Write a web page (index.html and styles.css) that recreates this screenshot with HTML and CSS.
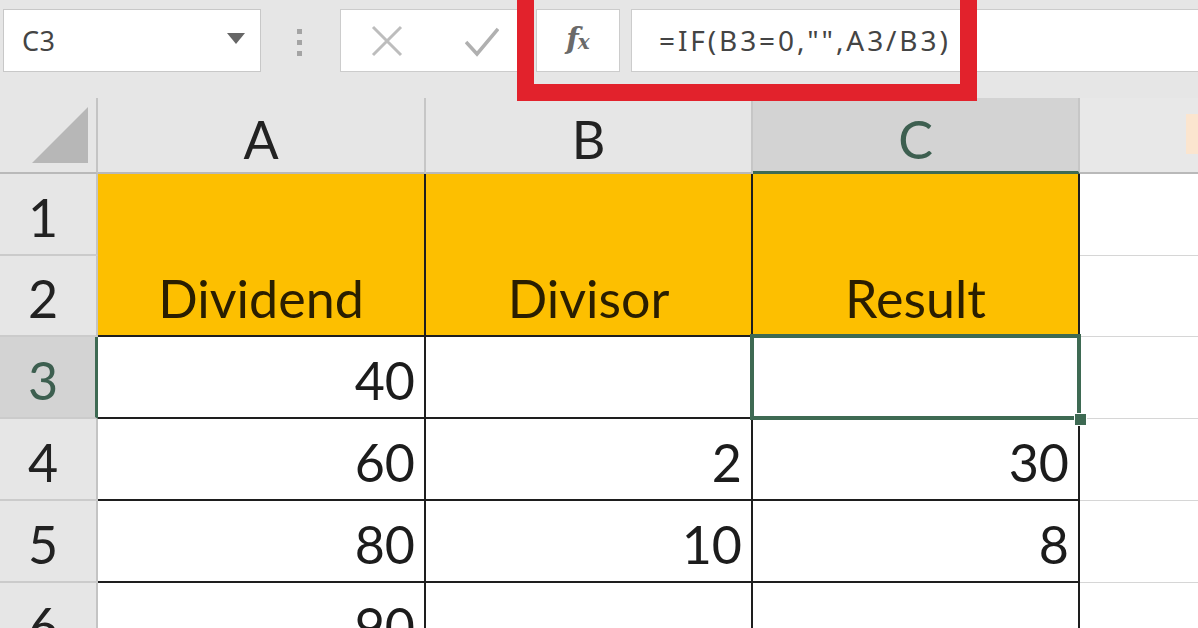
FILE: index.html
```html
<!DOCTYPE html>
<html>
<head>
<meta charset="utf-8">
<link rel="stylesheet" href="styles.css">
</head>
<body>
<div class="page">
  <div class="toolbar">
    <div class="namebox">
      <span class="name">C3</span>
      <svg class="drop" width="18" height="11" viewBox="0 0 18 11"><polygon points="0,0 18,0 9,11" fill="#666"/></svg>
    </div>
    <div class="dots"><i></i><i></i><i></i></div>
    <div class="editbox">
      <svg class="cancel" width="32" height="32" viewBox="0 0 32 32"><path d="M2 2 L30 30 M30 2 L2 30" stroke="#bdbdbd" stroke-width="3" fill="none"/></svg>
      <svg class="enter" width="34" height="30" viewBox="0 0 34 30"><path d="M1 15 L12 27 L33 2" stroke="#b0b0b0" stroke-width="3.5" fill="none"/></svg>
    </div>
    <div class="fxbox"><span class="fx">f<span class="fxx">x</span></span></div>
    <div class="formula">=IF(B3=0,"",A3/B3)</div>
    <div class="redmark"></div>
  </div>

  <div class="grid">
    <div class="corner"><svg width="56" height="56" viewBox="0 0 56 56"><polygon points="56,0 56,56 0,56" fill="#b7b7b7"/></svg></div>
    <div class="colhead">A</div>
    <div class="colhead">B</div>
    <div class="colhead active">C</div>
    <div class="colhead last"><span class="peek"></span></div>

    <div class="rowhead">1</div>
    <div class="cell gold merged">Dividend</div>
    <div class="cell gold merged">Divisor</div>
    <div class="cell gold merged">Result</div>
    <div class="cell free"></div>

    <div class="rowhead">2</div>
    <div class="cell free"></div>

    <div class="rowhead active">3</div>
    <div class="cell num">40</div>
    <div class="cell num"></div>
    <div class="cell num selected"><span class="handle"></span></div>
    <div class="cell free"></div>

    <div class="rowhead">4</div>
    <div class="cell num">60</div>
    <div class="cell num">2</div>
    <div class="cell num">30</div>
    <div class="cell free"></div>

    <div class="rowhead">5</div>
    <div class="cell num">80</div>
    <div class="cell num">10</div>
    <div class="cell num">8</div>
    <div class="cell free"></div>

    <div class="rowhead">6</div>
    <div class="cell num">90</div>
    <div class="cell num"></div>
    <div class="cell num"></div>
    <div class="cell free"></div>
  </div>
</div>
</body>
</html>
```

FILE: styles.css
```css
html, body {
  margin: 0;
  padding: 0;
}
body {
  background: #e6e6e6;
  width: 1198px;
  height: 628px;
  overflow: hidden;
}
.page {
  width: 1198px;
  height: 628px;
  overflow: hidden;
  position: relative;
}

/* ---------- formula bar ---------- */
.toolbar {
  position: relative;
  height: 98px;
  display: flex;
  align-items: flex-start;
  padding: 9px 0 0 3px;
  box-sizing: border-box;
  background: #e6e6e6;
  font-family: "Noto Sans", "Open Sans", sans-serif;
  color: #444;
}
.namebox {
  width: 258px;
  height: 63px;
  box-sizing: border-box;
  background: #fff;
  border: 1px solid #c8c8c8;
  display: flex;
  align-items: center;
  padding: 0 15px 0 18px;
}
.name {
  font-size: 27px;
  flex: 1;
  letter-spacing: 0.5px;
}
.drop {
  margin-top: -4px;
}
.dots {
  width: 6px;
  margin: 20px 37px 0 36px;
  display: flex;
  flex-direction: column;
  gap: 6px;
}
.dots i {
  display: block;
  width: 5px;
  height: 5px;
  background: #a4a4a4;
}
.editbox {
  width: 186px;
  height: 63px;
  box-sizing: border-box;
  background: #fff;
  border: 1px solid #cccccc;
  display: flex;
  align-items: center;
  padding-left: 30px;
}
.cancel { margin-right: 62px; }
.enter { margin-top: 2px; }
.fxbox {
  width: 84px;
  height: 63px;
  margin-left: 10px;
  box-sizing: border-box;
  background: #fff;
  border: 1px solid #cccccc;
  display: flex;
  align-items: center;
  justify-content: center;
}
.fx {
  font-family: "DejaVu Serif", "Liberation Serif", serif;
  font-style: italic;
  font-weight: bold;
  font-size: 29px;
  color: #6a6a6a;
  margin-top: -4px;
}
.fxx {
  font-size: 20px;
  margin-left: -1px;
}
.formula {
  flex: 1;
  height: 63px;
  margin-left: 11px;
  margin-right: -2px;
  box-sizing: border-box;
  background: #fff;
  border: 1px solid #cccccc;
  font-size: 28px;
  letter-spacing: 2.9px;
  display: flex;
  align-items: center;
  padding-left: 27px;
  padding-bottom: 2px;
}
.redmark {
  position: absolute;
  left: 517px;
  top: -30px;
  width: 460px;
  height: 131px;
  box-sizing: border-box;
  border: 17px solid #e2222c;
}

/* ---------- sheet grid ---------- */
.grid {
  display: grid;
  grid-template-columns: 98px 328px 327px 327px 118px;
  grid-template-rows: 76px 82px 81px 82px 82px 82px 82px;
  font-family: "Lato", "Carlito", sans-serif;
  font-size: 52px;
  line-height: 1;
  color: #1c1c1c;
  background: #fff;
}
.corner {
  background: #e6e6e6;
  border-right: 2px solid #c4c4c4;
  border-bottom: 2px solid #b9b9b9;
  display: flex;
  align-items: flex-end;
  justify-content: flex-end;
  padding: 0 8px 9px 0;
  box-sizing: border-box;
}
.colhead {
  background: #e6e6e6;
  border-right: 2px solid #c6c6c6;
  border-bottom: 2px solid #b9b9b9;
  box-sizing: border-box;
  display: flex;
  align-items: flex-end;
  justify-content: center;
  padding-bottom: 7px;
  color: #222;
}
.colhead.active {
  background: #d3d3d3;
  color: #3d5f50;
  border-bottom: 3px solid #3e6a53;
  padding-bottom: 6px;
}
.colhead.last {
  border-right: none;
  background: #e8e8e8;
  position: relative;
}
.peek {
  position: absolute;
  right: 0;
  top: 16px;
  width: 12px;
  height: 40px;
  background: #fbe5cf;
}
.rowhead {
  background: #e6e6e6;
  border-right: 2px solid #c4c4c4;
  border-bottom: 2px solid #cbcbcb;
  box-sizing: border-box;
  display: flex;
  align-items: flex-end;
  justify-content: center;
  padding: 0 10px 11px 0;
  color: #222;
}
.rowhead.active {
  background: #d3d3d3;
  color: #3d5f50;
  border-right: 3px solid #3e6a53;
  padding-right: 9px;
}
.cell {
  box-sizing: border-box;
  border-right: 2px solid #1e1e1e;
  border-bottom: 2px solid #1e1e1e;
  display: flex;
  align-items: flex-end;
  padding: 0 9px 11px 9px;
}
.cell.gold {
  background: #fdbf00;
  color: #2a1e00;
  justify-content: center;
}
.cell.merged {
  grid-row: span 2;
}
.cell.num {
  justify-content: flex-end;
  background: #fff;
}
.cell.free {
  border-right: none;
  border-bottom: 1px solid #d6d6d6;
}
.cell.selected {
  position: relative;
}
.cell.selected::after {
  content: "";
  position: absolute;
  left: -3px;
  top: -3px;
  right: -3px;
  bottom: -3px;
  border: 4px solid #3e6a53;
}
.handle {
  position: absolute;
  right: -9px;
  bottom: -9px;
  width: 11px;
  height: 11px;
  background: #3e6a53;
  border: 1px solid #fff;
  z-index: 2;
}
```
